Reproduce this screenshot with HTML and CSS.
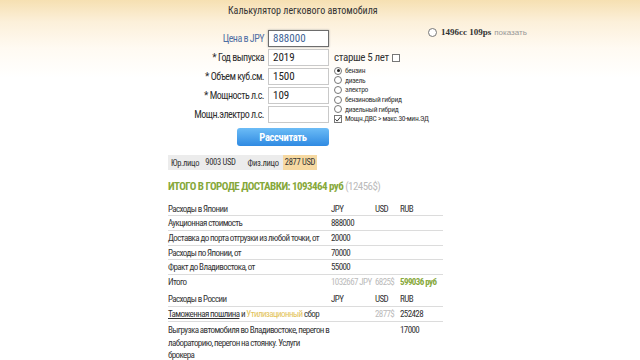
FILE: index.html
```html
<!DOCTYPE html>
<html>
<head>
  <meta charset="UTF-8">
  <meta name="viewport" content="width=device-width, initial-scale=1.0">
  <title>Калькулятор легкового автомобиля</title>
  <link rel="stylesheet" href="styles.css">
</head>
<body>
  <main class="page">
    <h1 class="title">Калькулятор легкового автомобиля</h1>

    <section class="top">
      <form class="calc-form">
        <label class="lbl lbl-blue">Цена в JPY</label>
        <input class="inp inp-focus" value="888000">
        <label class="lbl">* Год выпуска</label>
        <input class="inp" value="2019">
        <label class="lbl">* Объем куб.см.</label>
        <input class="inp" value="1500">
        <label class="lbl">* Мощность л.с.</label>
        <input class="inp" value="109">
        <label class="lbl">Мощн.электро л.с.</label>
        <input class="inp" value="">
        <button type="button" class="btn-calc">Рассчитать</button>
      </form>

      <div class="options">
        <div class="older">старше 5 лет <span class="box"></span></div>
        <div class="opt"><span class="radio on"></span>бензин</div>
        <div class="opt"><span class="radio"></span>дизель</div>
        <div class="opt"><span class="radio"></span>электро</div>
        <div class="opt"><span class="radio"></span>бензиновый гибрид</div>
        <div class="opt"><span class="radio"></span>дизельный гибрид</div>
        <div class="opt">
          <span class="check">
            <svg width="8" height="8" viewBox="0 0 8 8"><path d="M1.3 4.2 L3.2 6.1 L6.8 1.6" fill="none" stroke="#333" stroke-width="1"/></svg>
          </span>Мощн.ДВС &gt; макс.30-мин.ЭД
        </div>
      </div>

      <div class="saved">
        <span class="radio big"></span><b>1496cc 109ps</b> <span class="show">показать</span>
      </div>
    </section>

    <div class="prices">
      <span class="p-name">Юр.лицо</span><span class="p-val">9003 USD</span>
      <span class="p-name p-gap">Физ.лицо</span><span class="p-val p-hl">2877 USD</span>
    </div>

    <h2 class="total">ИТОГО В ГОРОДЕ ДОСТАВКИ: 1093464 руб <span class="muted">(12456$)</span></h2>

    <table class="costs">
      <tr class="head">
        <td>Расходы в Японии</td><td>JPY</td><td>USD</td><td>RUB</td>
      </tr>
      <tr><td>Аукционная стоимость</td><td>888000</td><td></td><td></td></tr>
      <tr><td>Доставка до порта отгрузки из любой точки, от</td><td>20000</td><td></td><td></td></tr>
      <tr><td>Расходы по Японии, от</td><td>70000</td><td></td><td></td></tr>
      <tr><td>Фракт до Владивостока, от</td><td>55000</td><td></td><td></td></tr>
      <tr class="sum">
        <td>Итого</td><td class="muted">1032667 JPY</td><td class="muted">6825$</td><td class="green">599036 руб</td>
      </tr>
      <tr class="head">
        <td>Расходы в России</td><td>JPY</td><td>USD</td><td>RUB</td>
      </tr>
      <tr>
        <td><u>Таможенная пошлина</u> и <span class="gold">Утилизационный</span> сбор</td><td></td><td class="muted">2877$</td><td>252428</td>
      </tr>
      <tr class="last">
        <td>Выгрузка автомобиля во Владивостоке, перегон в лабораторию, перегон на стоянку. Услуги<br>брокера</td><td></td><td></td><td>17000</td>
      </tr>
    </table>
  </main>
</body>
</html>
```

FILE: styles.css
```css
* {
  box-sizing: border-box;
}

body {
  margin: 0;
  min-height: 100vh;
  background: linear-gradient(to bottom, #f6e0b2 0, #fcf0da 22px, #fffaf2 48px, #fff 78px) no-repeat;
  color: #333;
  font-family: "Liberation Sans Narrow", "Roboto Condensed", "DejaVu Sans Condensed", sans-serif;
}

.page {
  padding: 4px 0 0 168px;
}

.title {
  margin: 0;
  padding-left: 60px;
  font-size: 10px;
  font-weight: normal;
  line-height: 13px;
}

.top {
  display: flex;
  align-items: flex-start;
  margin-top: 13px;
}

.calc-form {
  display: grid;
  grid-template-columns: 96px 61px;
  column-gap: 4px;
  row-gap: 2px;
  align-items: center;
  margin: 0;
}

.lbl {
  text-align: right;
  font-size: 10px;
  letter-spacing: -0.5px;
  white-space: nowrap;
  color: #2e2e2e;
}

.lbl-blue {
  color: #4f6ea3;
}

.inp {
  height: 17px;
  width: 61px;
  padding: 0 4px;
  border: 1px solid #c9c9c9;
  background: #fff;
  font-family: inherit;
  font-size: 11px;
  color: #222;
}

.inp-focus {
  border: 1px solid #6d6d6d;
  box-shadow: 0 0 2px #aaa;
  color: #3d5f94;
}

.btn-calc {
  grid-column: 1 / 3;
  justify-self: end;
  width: 92px;
  height: 18px;
  margin-top: 3px;
  border: none;
  border-radius: 3px;
  background: linear-gradient(to bottom, #6cbcf6, #2f8ae2);
  color: #fff;
  font-family: inherit;
  font-size: 10.5px;
  font-weight: bold;
  letter-spacing: -0.3px;
}

.options {
  width: 90px;
  margin-left: 5px;
  padding-top: 19px;
}

.older {
  display: flex;
  align-items: center;
  gap: 3px;
  height: 17px;
  font-size: 11px;
  letter-spacing: -0.35px;
}

.box {
  width: 8px;
  height: 8px;
  border: 1px solid #777;
  background: #fff;
}

.opt {
  display: flex;
  align-items: center;
  gap: 3px;
  height: 9.6px;
  font-size: 7.5px;
  letter-spacing: -0.3px;
  white-space: nowrap;
}

.radio {
  position: relative;
  width: 8px;
  height: 8px;
  flex: none;
  border: 1px solid #777;
  border-radius: 50%;
  background: #fff;
}

.radio.on::after {
  content: "";
  position: absolute;
  top: 1.5px;
  left: 1.5px;
  width: 3px;
  height: 3px;
  border-radius: 50%;
  background: #222;
}

.check {
  display: flex;
  width: 8px;
  height: 8px;
  flex: none;
  border: 1px solid #777;
  background: #fff;
}

.check svg {
  margin: -1px;
}

.saved {
  display: flex;
  align-items: center;
  gap: 3px;
  margin: -3px 0 0 4px;
  font-family: "Liberation Serif", serif;
  font-size: 9px;
  white-space: nowrap;
}

.saved b {
  color: #333;
}

.radio.big {
  width: 9px;
  height: 9px;
  margin-right: 1px;
}

.show {
  font-family: "Liberation Sans Narrow", sans-serif;
  font-size: 8px;
  color: #999;
}

.prices {
  display: inline-flex;
  align-items: center;
  height: 15px;
  margin-top: 9px;
  background: #ececec;
  font-size: 8.5px;
  letter-spacing: -0.3px;
}

.p-name {
  padding: 0 4px 0 3px;
}

.p-val {
  padding: 0 2px;
  height: 15px;
  line-height: 15px;
}

.p-gap {
  margin-left: 7px;
}

.p-hl {
  background: #f6d9a2;
}

.total {
  margin: 9px 0 0;
  font-size: 11px;
  font-weight: bold;
  letter-spacing: -0.55px;
  line-height: 16px;
  color: #86a83a;
}

.total .muted {
  font-weight: normal;
}

.muted {
  color: #bbb;
}

.green {
  color: #86a83a;
  font-weight: bold;
}

.gold {
  color: #e3c35a;
}

.costs {
  width: 275px;
  margin-top: 6.5px;
  border-collapse: collapse;
  font-size: 9px;
  letter-spacing: -0.6px;
}

.costs td {
  padding: 2px 0 0.7px;
  border-bottom: 1px solid #dcdcdc;
  vertical-align: top;
  line-height: 11px;
  white-space: nowrap;
}

.costs td:nth-child(1) { width: 163px; }
.costs td:nth-child(2) { width: 44px; }
.costs td:nth-child(3) { width: 25px; }
.costs td:nth-child(4) { width: 43px; }

.costs .sum td {
  border-bottom: none;
  padding-bottom: 4.5px;
}

.costs .last td {
  border-bottom: none;
  line-height: 12.7px;
}

.costs .last td:first-child {
  white-space: normal;
}
```
